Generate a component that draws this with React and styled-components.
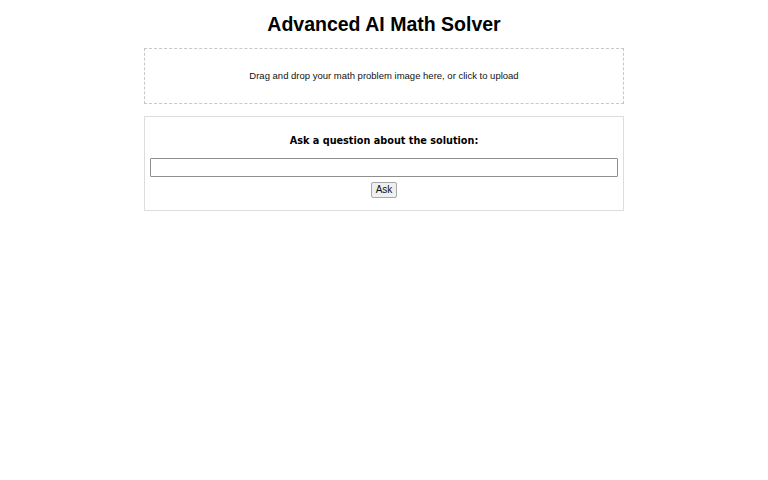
import React, { useState } from 'react';
import styled, { createGlobalStyle } from 'styled-components';

const GlobalStyle = createGlobalStyle`
  body {
    margin: 0;
    background: #fff;
    font-family: 'Liberation Sans', Arial, sans-serif;
    color: #000;
  }
`;

const Page = styled.div`
  width: 480px;
  margin: 0 auto;
  padding-top: 13px;
`;

const Title = styled.h1`
  margin: 0 0 12px;
  font-size: 19.5px;
  line-height: 23px;
  font-weight: bold;
  text-align: center;
`;

const DropZone = styled.div`
  height: 56px;
  box-sizing: border-box;
  border: 1px dashed #c8c8c8;
  display: flex;
  align-items: center;
  justify-content: center;
  padding-bottom: 1px;
  font-size: 9.5px;
  color: #111;
  cursor: pointer;
  margin-bottom: 12px;
`;

const QuestionBox = styled.div`
  box-sizing: border-box;
  border: 1px solid #ddd;
  padding: 5px 5px 12px;
  display: flex;
  flex-direction: column;
  align-items: center;
`;

const QuestionTitle = styled.h3`
  margin: 11px 0 10px;
  font-family: 'DejaVu Sans', sans-serif;
  font-size: 9.7px;
  line-height: 15px;
  font-weight: bold;
`;

const QuestionInput = styled.input`
  width: 100%;
  height: 19px;
  box-sizing: border-box;
  border: 1px solid #8f8f8f;
  border-radius: 1px;
  padding: 0 4px;
  font-size: 11px;
  margin-bottom: 5px;
`;

const AskButton = styled.button`
  font-family: 'Liberation Sans', Arial, sans-serif;
  font-size: 10px;
  line-height: 14px;
  height: 16px;
  padding: 0 4px;
  background: #efefef;
  border: 1px solid #a8a8a8;
  border-radius: 2px;
  color: #111;
  cursor: pointer;
`;

export default function App() {
  const [question, setQuestion] = useState('');

  return (
    <>
      <GlobalStyle />
      <Page>
        <Title>Advanced AI Math Solver</Title>
        <DropZone>Drag and drop your math problem image here, or click to upload</DropZone>
        <QuestionBox>
          <QuestionTitle>Ask a question about the solution:</QuestionTitle>
          <QuestionInput
            type="text"
            value={question}
            onChange={(e) => setQuestion(e.target.value)}
          />
          <AskButton>Ask</AskButton>
        </QuestionBox>
      </Page>
    </>
  );
}
